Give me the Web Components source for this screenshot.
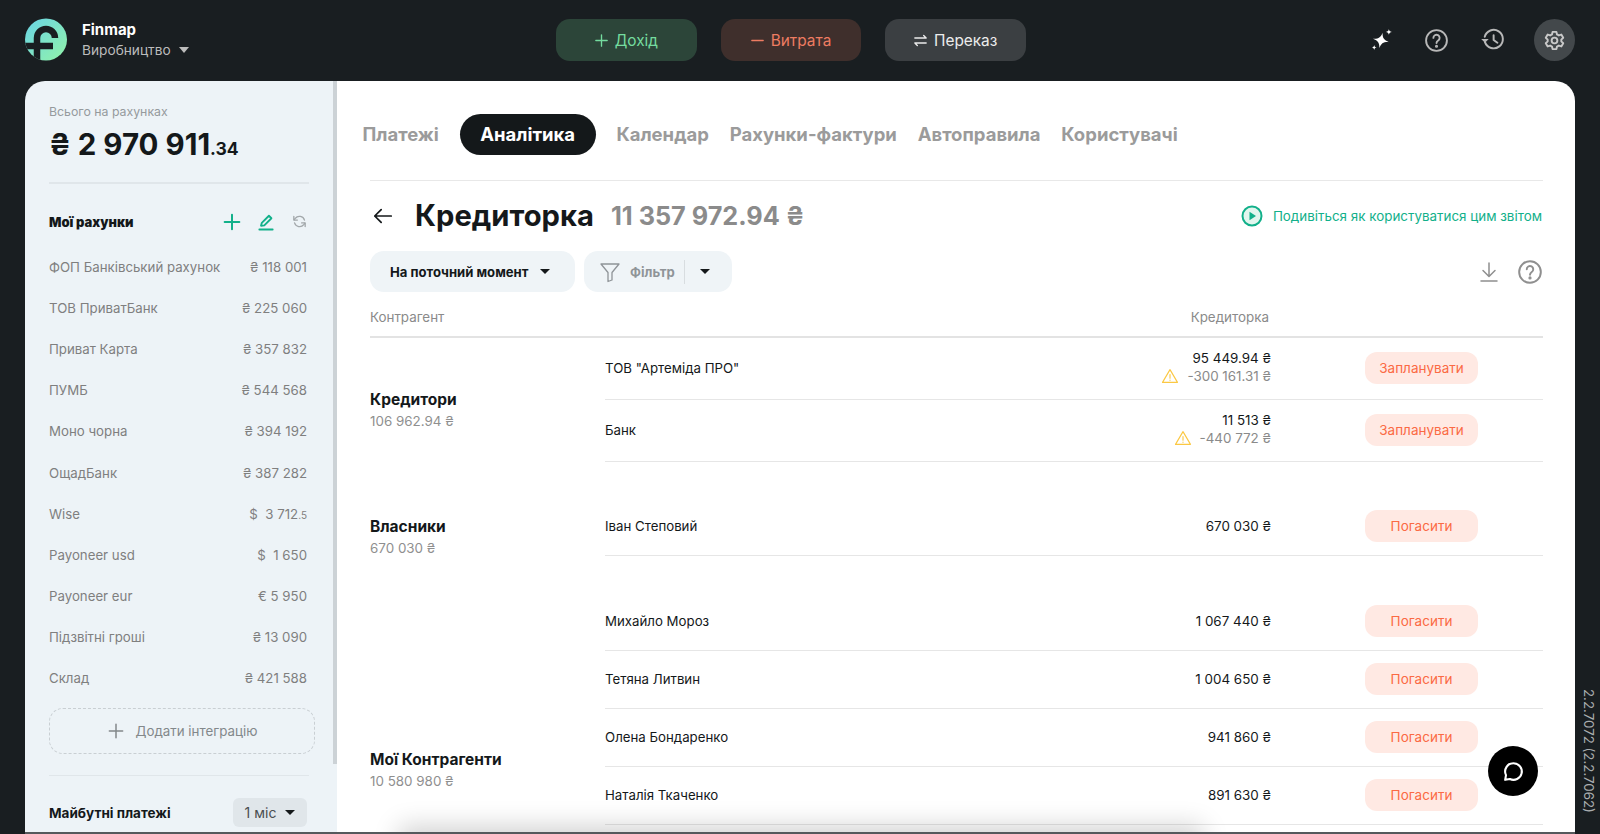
<!DOCTYPE html>
<html lang="uk">
<head>
<meta charset="utf-8">
<title>Finmap</title>
<style>
  html, body { margin: 0; height: 100%; overflow: hidden; background: #191e21; font-family: Inter, "Noto Sans", sans-serif; }
</style>
</head>
<body>
<fm-app></fm-app>

<script>
const icons = {
  plus: '<path d="M12 4v16M4 12h16"/>',
  minus: '<path d="M4 12h16"/>',
  swap: '<path d="M4 8.500h16M16.500 5 20 8.500M20 15.500H4M7.500 19 4 15.500"/>',
  help: '<circle cx="12" cy="12" r="10"/><path d="M9 9.500a3 3 0 1 1 4.600 2.500c-1 .7-1.600 1.300-1.600 2.500"/><circle cx="12" cy="17.500" r=".6" fill="currentColor"/>',
  history: '<path d="M5.500 14a8.500 8.500 0 1 0-.2-5"/><path d="M2 11l3.500 3.500L9 11" fill="currentColor" stroke="none"/><path d="M13.500 7.500V12l3.500 2.500"/>',
  gear: '<circle cx="12" cy="12" r="3"/><path d="M10 3h4l.6 2.700 1.900 1 2.600-.9 2 3.400-2 1.900v1.800l2 1.900-2 3.400-2.600-.9-1.900 1L14 21h-4l-.6-2.700-1.900-1-2.600.9-2-3.400 2-1.900v-1.800l-2-1.900 2-3.400 2.600.9 1.900-1z"/>',
  sparkle: '<path d="M11 4c.9 5.500 3 7.600 9 8.500-6 .9-8.100 3-9 8.500-.9-5.500-3-7.600-9-8.500 6-.9 8.100-3 9-8.500z" transform="rotate(12 11 12)" fill="currentColor" stroke="none"/><path d="M19.500 0c.3 2 1.100 2.800 3.300 3.200-2.200.4-3 1.200-3.300 3.200-.3-2-1.100-2.800-3.300-3.200 2.200-.4 3-1.200 3.300-3.200zM3.500 17.500c.3 1.700.9 2.300 2.700 2.700-1.800.3-2.400 1-2.700 2.700-.3-1.700-.9-2.400-2.700-2.700 1.800-.4 2.400-1 2.700-2.700z" fill="currentColor" stroke="none"/>',
  edit: '<path d="M6 16.500 7 13 15.500 4.500 18.500 7.500 10 16z"/><path d="M4 21h16"/>',
  refresh: '<path d="M19 10a7.500 7.500 0 0 0-13-2.500L4.500 9.500M5 14a7.500 7.500 0 0 0 13 2.500l1.500-2"/><path d="M4 5v5h5M20 19v-5h-5"/>',
  back: '<path d="M21 12H3M10 5l-7 7 7 7"/>',
  download: '<path d="M12 3v13M6 10.500l6 6 6-6M4 21h16"/>',
  filter: '<path d="M3 4h18l-7 8.500V20l-4 1.500v-9z"/>',
  chat: '<path d="M12 4a8 8 0 1 1-3.500 15.200L4 20l.8-4.500A8 8 0 0 1 12 4z"/>',
  warn: '<path d="M12 3.500 22 20.500H2z"/><path d="M12 10v5M12 17.300v.5"/>'
}

const icon = (name, size, width = 2) => `<svg width="${size}" height="${size}" viewBox="0 0 24 24" fill="none" stroke="currentColor" stroke-width="${width}" stroke-linecap="round" stroke-linejoin="round">${icons[name]}</svg>`

class FmAction extends HTMLElement {
  constructor() {
    super()

    this.attachShadow({ mode: 'open' })
  }

  connectedCallback() {
    const kind = this.getAttribute('kind')
    const glyph = { income: 'plus', expense: 'minus', transfer: 'swap' }[kind]

    this.shadowRoot.innerHTML = `
      <style>
        :host {
          display: flex;
          align-items: center;
          justify-content: center;
          gap: 5px;
          box-sizing: border-box;
          width: 141px;
          height: 42px;
          padding-right: 2px;
          border-radius: 14px;
          font-size: 15.400px;
        }
        :host([kind="income"]) { background: #2c4539; color: #74dc9f; }
        :host([kind="expense"]) { background: #3f2f2c; color: #ee7c62; }
        :host([kind="transfer"]) { background: #3b3f42; color: #ececec; }
        svg { display: block; }
      </style>
      ${icon(glyph, 17, 1.900)}
      <slot></slot>
    `
  }
}

class FmHeader extends HTMLElement {
  constructor() {
    super()

    this.attachShadow({ mode: 'open' })
  }

  connectedCallback() {
    this.shadowRoot.innerHTML = `
      <style>
        :host {
          display: grid;
          grid-template-columns: 531px 470px 1fr;
          align-items: center;
          box-sizing: border-box;
          height: 81px;
          padding: 0 25px 1px;
          color: #fff;
        }
        .brand { display: flex; align-items: center; gap: 15px; }
        .logo { display: block; margin-top: -1px; }
        .name { font-size: 15px; font-weight: 700; line-height: 20px; }
        .company { display: flex; align-items: center; gap: 8px; font-size: 13.700px; line-height: 20px; color: #bcbcbc; }
        .caret { width: 0; height: 0; border: 5px solid transparent; border-top: 6px solid #bcbcbc; border-bottom: 0; }
        .actions { display: flex; gap: 24px; }
        .tools { display: flex; align-items: center; justify-content: flex-end; color: #b8b8b8; }
        .tools svg { display: block; }
        .sparkle { color: #fff; margin-right: 31px; }
        .help { margin-right: 30px; }
        .history { margin-right: 29px; }
        .gear { display: flex; align-items: center; justify-content: center; width: 41px; height: 42px; border-radius: 50%; background: #43484b; color: #c9c9c9; }
      </style>
      <div class="brand">
        <svg class="logo" width="42" height="43" viewBox="0 0 42 43">
          <defs>
            <linearGradient id="lg" x1="0" y1="0" x2="1" y2="1">
              <stop offset="0" stop-color="#69d4e6"/>
              <stop offset="1" stop-color="#92f3a8"/>
            </linearGradient>
            <clipPath id="lc"><circle cx="21" cy="21.500" r="21"/></clipPath>
          </defs>
          <circle cx="21" cy="21.500" r="21" fill="url(#lg)"/>
          <g clip-path="url(#lc)" fill="none" stroke="#191e21" stroke-width="6.500">
            <path d="M12 44V20a9 9 0 0 1 18 0"/>
            <path d="M-2 28H28"/>
          </g>
        </svg>
        <div>
          <div class="name">Finmap</div>
          <div class="company">Виробництво <span class="caret"></span></div>
        </div>
      </div>
      <div class="actions">
        <fm-action kind="income">Дохід</fm-action>
        <fm-action kind="expense">Витрата</fm-action>
        <fm-action kind="transfer">Переказ</fm-action>
      </div>
      <div class="tools">
        <span class="sparkle">${icon('sparkle', 22)}</span>
        <span class="help">${icon('help', 25, 1.800)}</span>
        <span class="history">${icon('history', 26, 1.800)}</span>
        <span class="gear">${icon('gear', 23, 2)}</span>
      </div>
    `
  }
}

class FmAccount extends HTMLElement {
  constructor() {
    super()

    this.attachShadow({ mode: 'open' })
  }

  connectedCallback() {
    this.shadowRoot.innerHTML = `
      <style>
        :host {
          display: flex;
          align-items: center;
          justify-content: space-between;
          height: 41.100px;
          font-size: 13.250px;
          color: #7f7f7f;
        }
      </style>
      <span>${this.getAttribute('name')}</span>
      <span><slot></slot></span>
    `
  }
}

class FmSidebar extends HTMLElement {
  constructor() {
    super()

    this.attachShadow({ mode: 'open' })
  }

  connectedCallback() {
    this.shadowRoot.innerHTML = `
      <style>
        :host {
          display: block;
          position: relative;
          flex: none;
          width: 312px;
          box-sizing: border-box;
          padding: 23px 28px 0 24px;
          background: #edf3f7;
          overflow: hidden;
        }
        .scroll { position: absolute; top: 0; right: 0; width: 4px; height: 683px; background: #ccd2d6; }
        .total-label { font-size: 12.300px; line-height: 16px; color: #959a9d; }
        .total { display: flex; align-items: baseline; font-size: 29.500px; font-weight: 700; line-height: 40px; margin-top: 4px; color: #14181a; white-space: pre; }
        .total small { font-size: 17.500px; }
        hr { border: 0; height: 1.500px; background: #e0e6ea; margin: 0; }
        .first { margin: 13px 0 0; }
        .head { display: flex; align-items: center; height: 76px; font-size: 13px; font-weight: 700; color: #14181a; }
        .head b { flex: 1; }
        .head svg { display: block; }
        .add { color: #12b08a; margin-right: 13px; }
        .edit { color: #12b08a; margin-right: 15px; }
        .refresh { color: #a3a8ab; margin-right: 1px; }
        .accounts { margin: -13px 2px 0 0; }
        .integrate {
          display: flex;
          align-items: center;
          justify-content: center;
          gap: 9px;
          width: 264px;
          height: 44px;
          margin-top: 9px;
          border: 1px dashed #c9cfd3;
          border-radius: 14px;
          font-size: 13.350px;
          color: #83888b;
        }
        .integrate svg { display: block; }
        .last { margin: 21px 0 0; }
        .future { display: flex; align-items: center; justify-content: space-between; margin: 22px 2px 0 0; font-size: 13.500px; font-weight: 700; color: #14181a; }
        .period { display: flex; align-items: center; justify-content: center; gap: 9px; width: 74px; height: 29px; border-radius: 6px; background: #e0e6ea; font-weight: 400; font-size: 14px; color: #4a4e50; }
        .caret { width: 0; height: 0; border: 5px solid transparent; border-top: 5px solid #14181a; border-bottom: 0; }
      </style>
      <div class="scroll"></div>
      <div class="total-label">Всього на рахунках</div>
      <div class="total">₴ 2 970 911<small>.34</small></div>
      <hr class="first">
      <div class="head">
        <b>Мої рахунки</b>
        <span class="add">${icon('plus', 22, 2.200)}</span>
        <span class="edit">${icon('edit', 20, 2.200)}</span>
        <span class="refresh">${icon('refresh', 17, 1.900)}</span>
      </div>
      <div class="accounts"><slot></slot></div>
      <div class="integrate">${icon('plus', 20, 1.800)} Додати інтеграцію</div>
      <hr class="last">
      <div class="future">
        <span>Майбутні платежі</span>
        <span class="period">1 міс <span class="caret"></span></span>
      </div>
    `
  }
}

class FmTabs extends HTMLElement {
  constructor() {
    super()

    this.attachShadow({ mode: 'open' })
  }

  connectedCallback() {
    const active = this.getAttribute('active')
    const tabs = this.getAttribute('tabs').split(',')

    this.shadowRoot.innerHTML = `
      <style>
        :host {
          display: flex;
          align-items: center;
          gap: 20.800px;
          height: 41px;
          margin-left: -7.500px;
          font-size: 18.500px;
          font-weight: 700;
          color: #9b9b9b;
        }
        span { padding-bottom: 2px; }
        .on {
          display: flex;
          align-items: center;
          box-sizing: border-box;
          height: 41px;
          padding: 0 20.500px 2px;
          border-radius: 21px;
          background: #14181a;
          color: #fff;
        }
      </style>
      ${tabs.map(tab => `<span class="${tab === active ? 'on' : ''}">${tab}</span>`).join('')}
    `
  }
}

class FmRow extends HTMLElement {
  constructor() {
    super()

    this.attachShadow({ mode: 'open' })
  }

  connectedCallback() {
    const debt = this.getAttribute('debt')

    this.shadowRoot.innerHTML = `
      <style>
        :host {
          display: grid;
          grid-template-columns: 1fr auto 113px 65px;
          align-items: center;
          box-sizing: border-box;
          height: 58px;
          padding-bottom: 2px;
          border-bottom: 1px solid #e6e6e6;
          font-size: 13.250px;
          color: #14181a;
        }
        :host([debt]) { height: 62px; padding-bottom: 1px; }
        :host([debt]) .sum { margin-bottom: 2px; }
        .sum { text-align: right; font-size: 13.400px; line-height: 18px; margin-right: 94px; }
        .debt { display: flex; align-items: center; justify-content: flex-end; gap: 8px; color: #8a8a8a; }
        .debt svg { color: #fbc843; display: block; }
        .btn {
          display: flex;
          align-items: center;
          justify-content: center;
          height: 32px;
          border-radius: 12px;
          background: #ffe9e3;
          font-size: 13.500px;
          color: #fb6a44;
        }
      </style>
      <span>${this.getAttribute('name')}</span>
      <div class="sum">
        <div>${this.getAttribute('amount')}</div>
        ${debt ? `<div class="debt">${icon('warn', 18, 1.500)}<span>${debt}</span></div>` : ''}
      </div>
      <span class="btn">${this.getAttribute('action')}</span>
    `
  }
}

class FmGroup extends HTMLElement {
  constructor() {
    super()

    this.attachShadow({ mode: 'open' })
  }

  connectedCallback() {
    this.shadowRoot.innerHTML = `
      <style>
        :host {
          display: grid;
          grid-template-columns: 235px 1fr;
          margin-bottom: ${this.getAttribute('gap') || 36}px;
        }
        .label { padding-top: ${this.getAttribute('offset')}px; }
        .title { font-size: 15.500px; font-weight: 700; line-height: 20px; color: #14181a; }
        .total { font-size: 13.400px; line-height: 20px; margin-top: 1px; color: #8f8f8f; }
      </style>
      <div class="label">
        <div class="title">${this.getAttribute('title')}</div>
        <div class="total">${this.getAttribute('total')}</div>
      </div>
      <div><slot></slot></div>
    `
  }
}

class FmReport extends HTMLElement {
  constructor() {
    super()

    this.attachShadow({ mode: 'open' })
  }

  connectedCallback() {
    this.shadowRoot.innerHTML = `
      <style>
        :host {
          display: block;
          position: relative;
          flex: 1;
          min-width: 0;
          box-sizing: border-box;
          padding: 33px 32px 0 33px;
          background: #fff;
          overflow: hidden;
        }
        .rule { height: 1px; margin-top: 25px; background: #e8e8e8; }
        .title { display: flex; align-items: center; height: 70px; }
        .title svg { display: block; }
        .back { color: #14181a; margin-right: 21px; margin-left: 2px; }
        h1 { margin: -1px 17px 0 0; font-size: 29.200px; font-weight: 700; color: #14181a; }
        .sum { flex: 1; margin-top: -1px; font-size: 25.250px; font-weight: 700; color: #8b8b8b; }
        .guide { display: flex; align-items: center; gap: 10px; margin-right: 1px; font-size: 13.400px; color: #12b08a; }
        .play { position: relative; display: block; width: 22px; height: 22px; }
        .filters { display: flex; align-items: center; gap: 9px; height: 41px; }
        .select {
          display: flex;
          align-items: center;
          height: 41px;
          box-sizing: border-box;
          border-radius: 14px;
          background: #eff4f7;
          font-size: 13.100px;
          font-weight: 700;
          color: #14181a;
        }
        .moment { width: 205px; padding-left: 20px; gap: 12px; }
        .filter { width: 148px; padding-left: 14px; color: #8f9498; }
        .filter svg { display: block; margin-right: 8px; }
        .bar { width: 1px; height: 24px; margin: 0 15px 0 9px; background: #d8dde0; }
        .caret { width: 0; height: 0; border: 5.500px solid transparent; border-top: 5.500px solid #14181a; border-bottom: 0; }
        .end { display: flex; align-items: center; gap: 16px; margin-left: auto; color: #8f8f8f; }
        .end svg { display: block; }
        .head {
          display: flex;
          justify-content: space-between;
          align-items: center;
          height: 46px;
          padding: 6px 274px 0 0;
          box-sizing: border-box;
          border-bottom: 2px solid #e3e3e3;
          font-size: 13.400px;
          color: #8a8a8a;
        }
        .fade {
          position: absolute;
          left: 70px;
          right: 380px;
          bottom: -26px;
          height: 22px;
          box-shadow: 0 -4px 26px 8px rgba(0, 0, 0, .18);
        }
      </style>
      <fm-tabs tabs="Платежі,Аналітика,Календар,Рахунки-фактури,Автоправила,Користувачі" active="Аналітика"></fm-tabs>
      <div class="rule"></div>
      <div class="title">
        <span class="back">${icon('back', 22, 1.900)}</span>
        <h1>Кредиторка</h1>
        <span class="sum">11 357 972.94 ₴</span>
        <span class="guide">
          <svg class="play" viewBox="0 0 22 22">
            <circle cx="11" cy="11" r="9.500" fill="#e1f6ee" stroke="#12b08a" stroke-width="2"/>
            <path d="M8.500 6.800 15 11l-6.500 4.200z" fill="#12b08a"/>
          </svg>
          Подивіться як користуватися цим звітом
        </span>
      </div>
      <div class="filters">
        <span class="select moment">На поточний момент <span class="caret"></span></span>
        <span class="select filter">${icon('filter', 24, 1.300)}Фільтр<span class="bar"></span><span class="caret"></span></span>
        <span class="end">${icon('download', 24, 1.500)}${icon('help', 26, 1.800)}</span>
      </div>
      <div class="head"><span>Контрагент</span><span>Кредиторка</span></div>
      <slot></slot>
      <div class="fade"></div>
    `
  }
}

class FmApp extends HTMLElement {
  constructor() {
    super()

    this.attachShadow({ mode: 'open' })
  }

  connectedCallback() {
    this.shadowRoot.innerHTML = `
      <style>
        :host {
          display: flex;
          flex-direction: column;
          position: relative;
          height: 834px;
          overflow: hidden;
          background: #191e21;
          font-family: Inter, "Noto Sans", sans-serif;
        }
        main {
          display: flex;
          flex: 1;
          min-height: 0;
          margin: 0 25px;
          border-radius: 20px 20px 0 0;
          overflow: hidden;
        }
        .foot { position: absolute; left: 25px; right: 25px; bottom: 0; height: 2px; background: #55595c; }
        .version {
          position: absolute;
          right: 3px;
          bottom: 21px;
          writing-mode: vertical-rl;
          font-size: 13.300px;
          color: #a9adaf;
        }
        .chat {
          position: absolute;
          left: 1488px;
          top: 746px;
          display: flex;
          align-items: center;
          justify-content: center;
          width: 50px;
          height: 50px;
          border-radius: 50%;
          background: #000;
          color: #fff;
        }
      </style>
      <fm-header></fm-header>
      <main>
        <fm-sidebar>
          <fm-account name="ФОП Банківський рахунок">₴ 118 001</fm-account>
          <fm-account name="ТОВ ПриватБанк">₴ 225 060</fm-account>
          <fm-account name="Приват Карта">₴ 357 832</fm-account>
          <fm-account name="ПУМБ">₴ 544 568</fm-account>
          <fm-account name="Моно чорна">₴ 394 192</fm-account>
          <fm-account name="ОщадБанк">₴ 387 282</fm-account>
          <fm-account name="Wise">$ &nbsp;3 712<small style="font-size:10px">.5</small></fm-account>
          <fm-account name="Payoneer usd">$ &nbsp;1 650</fm-account>
          <fm-account name="Payoneer eur">€ 5 950</fm-account>
          <fm-account name="Підзвітні гроші">₴ 13 090</fm-account>
          <fm-account name="Склад">₴ 421 588</fm-account>
        </fm-sidebar>
        <fm-report>
          <fm-group title="Кредитори" total="106 962.94 ₴" offset="52">
            <fm-row name='ТОВ "Артеміда ПРО"' amount="95 449.94 ₴" debt="-300 161.31 ₴" action="Запланувати"></fm-row>
            <fm-row name="Банк" amount="11 513 ₴" debt="-440 772 ₴" action="Запланувати"></fm-row>
          </fm-group>
          <fm-group title="Власники" total="670 030 ₴" offset="19" gap="35">
            <fm-row name="Іван Степовий" amount="670 030 ₴" action="Погасити"></fm-row>
          </fm-group>
          <fm-group title="Мої Контрагенти" total="10 580 980 ₴" offset="157">
            <fm-row name="Михайло Мороз" amount="1 067 440 ₴" action="Погасити"></fm-row>
            <fm-row name="Тетяна Литвин" amount="1 004 650 ₴" action="Погасити"></fm-row>
            <fm-row name="Олена Бондаренко" amount="941 860 ₴" action="Погасити"></fm-row>
            <fm-row name="Наталія Ткаченко" amount="891 630 ₴" action="Погасити"></fm-row>
          </fm-group>
        </fm-report>
      </main>
      <div class="foot"></div>
      <div class="version">2.2.7072 (2.2.7062)</div>
      <div class="chat">${icon('chat', 25, 2)}</div>
    `
  }
}

customElements.define('fm-action', FmAction)
customElements.define('fm-header', FmHeader)
customElements.define('fm-account', FmAccount)
customElements.define('fm-sidebar', FmSidebar)
customElements.define('fm-tabs', FmTabs)
customElements.define('fm-row', FmRow)
customElements.define('fm-group', FmGroup)
customElements.define('fm-report', FmReport)
customElements.define('fm-app', FmApp)
</script>
</body>
</html>
